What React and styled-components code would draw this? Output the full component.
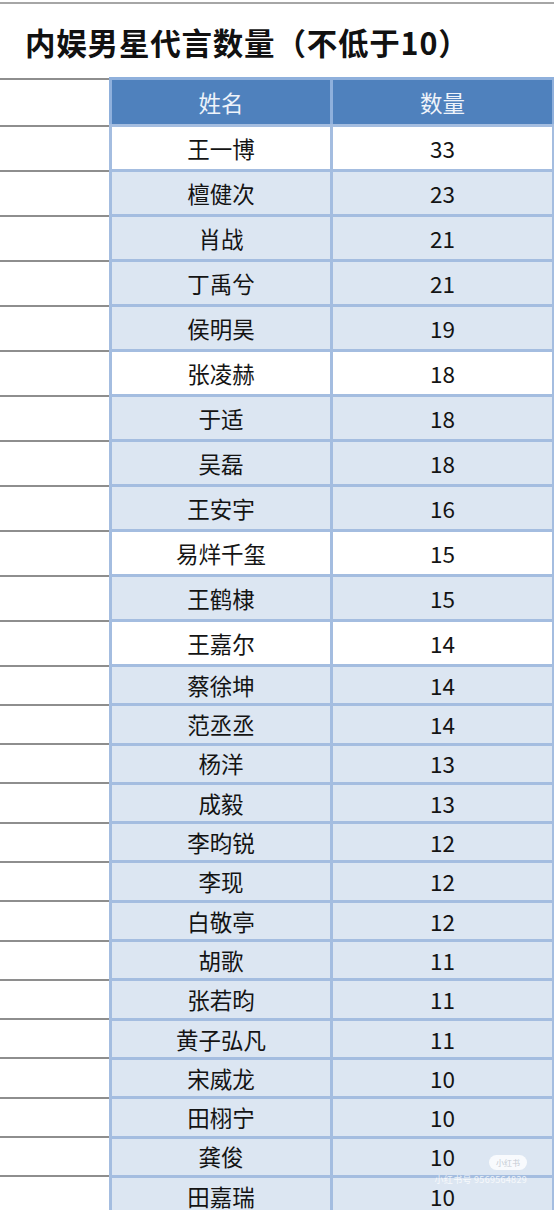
import React from 'react';
import styled, { createGlobalStyle } from 'styled-components';

/* ---------------------------------- Data ---------------------------------- */
const rows = [
	['王一博', 33, true],
	['檀健次', 23],
	['肖战', 21],
	['丁禹兮', 21],
	['侯明昊', 19],
	['张凌赫', 18, true],
	['于适', 18],
	['吴磊', 18],
	['王安宇', 16],
	['易烊千玺', 15, true],
	['王鹤棣', 15],
	['王嘉尔', 14, true],
	['蔡徐坤', 14],
	['范丞丞', 14],
	['杨洋', 13],
	['成毅', 13],
	['李昀锐', 12],
	['李现', 12],
	['白敬亭', 12],
	['胡歌', 11],
	['张若昀', 11],
	['黄子弘凡', 11],
	['宋威龙', 10],
	['田栩宁', 10],
	['龚俊', 10],
	['田嘉瑞', 10],
];

const GlobalStyle = createGlobalStyle`
	html, body {
		margin: 0;
		padding: 0;
		background: #ffffff;
	}
	body {
		font-family: "Noto Sans CJK SC", "Noto Sans", sans-serif;
		overflow: hidden;
	}
`;

const App = () => (
	<>
		<GlobalStyle />
		<Page>
			<TitleBar>
				<Title>内娱男星代言数量（不低于10）</Title>
			</TitleBar>
			<Sheet>
				<Row $h={47}>
					<Gutter />
					<HeadCell>姓名</HeadCell>
					<HeadCell $last>数量</HeadCell>
				</Row>
				{rows.map(([name, count, white], i) => (
					<Row key={name} $h={i < 12 ? 45 : 39.3}>
						<Gutter />
						<Cell $white={white}>{name}</Cell>
						<Cell $white={white} $last>
							{count}
						</Cell>
					</Row>
				))}
			</Sheet>
			<Watermark>
				<Badge>小红书</Badge>
				<MarkText>小红书号 9569564829</MarkText>
			</Watermark>
		</Page>
	</>
);

const Page = styled.div`
	position: relative;
	width: 554px;
	height: 1210px;
	overflow: hidden;
`;

const TitleBar = styled.header`
	margin-top: 2px;
	border-top: 2px solid #a6a6a6;
	height: 75px;
	display: flex;
	align-items: center;
	padding: 2px 0 0 25px;
	box-sizing: border-box;
`;

const Title = styled.h1`
	margin: 0;
	font-size: 30.5px;
	font-weight: 700;
	color: #111111;
	letter-spacing: 0.8px;
`;

const Sheet = styled.div`
	display: flex;
	flex-direction: column;
`;

const Row = styled.div`
	display: grid;
	grid-template-columns: 109px 221px 1fr;
	height: ${(p) => p.$h}px;
	flex: none;
`;

const Gutter = styled.div`
	border-top: 2px solid #8e8e8e;
	margin-top: 0.5px;
`;

const BaseCell = styled.div`
	display: flex;
	align-items: center;
	justify-content: center;
	box-sizing: border-box;
	border-top: 3px solid #a4bde0;
	border-left: 3px solid #a4bde0;
	border-right: ${(p) => (p.$last ? '2px solid #a4bde0' : 'none')};
	font-size: 22.5px;
	line-height: 1;
`;

const HeadCell = styled(BaseCell)`
	background: #4f81bd;
	color: #eef3fa;
	border-color: #8fb0dc;
	padding-top: 1px;
`;

const Cell = styled(BaseCell)`
	background: ${(p) => (p.$white ? '#ffffff' : '#dce6f2')};
	color: #141414;
`;

const Watermark = styled.div`
	position: absolute;
	right: 27px;
	top: 1155px;
	display: flex;
	flex-direction: column;
	align-items: flex-end;
	gap: 5px;
	pointer-events: none;
`;

const Badge = styled.span`
	background: rgba(255, 255, 255, 0.8);
	color: #c4cad3;
	font-size: 8px;
	padding: 2px 7px;
	border-radius: 8px;
`;

const MarkText = styled.span`
	color: rgba(255, 255, 255, 0.8);
	font-size: 9px;
	line-height: 10px;
	letter-spacing: 0.3px;
`;

export default App;
